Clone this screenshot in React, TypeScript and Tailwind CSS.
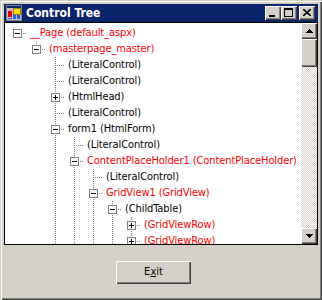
import React from "react";

type Row = {
  level: number;
  text: string;
  red?: boolean;
  box?: "minus" | "plus";
  anc: boolean[];
  next: boolean;
  root?: boolean;
};

// visible part of the control tree
const rows: Row[] = [
  { level: 0, text: "__Page (default_aspx)", red: true, box: "minus", anc: [], next: false, root: true },
  { level: 1, text: "(masterpage_master)", red: true, box: "minus", anc: [false], next: false },
  { level: 2, text: "(LiteralControl)", anc: [false, false], next: true },
  { level: 2, text: "(LiteralControl)", anc: [false, false], next: true },
  { level: 2, text: "(HtmlHead)", box: "plus", anc: [false, false], next: true },
  { level: 2, text: "(LiteralControl)", anc: [false, false], next: true },
  { level: 2, text: "form1 (HtmlForm)", box: "minus", anc: [false, false], next: true },
  { level: 3, text: "(LiteralControl)", anc: [false, false, true], next: true },
  { level: 3, text: "ContentPlaceHolder1 (ContentPlaceHolder)", red: true, box: "minus", anc: [false, false, true], next: true },
  { level: 4, text: "(LiteralControl)", anc: [false, false, true, true], next: true },
  { level: 4, text: "GridView1 (GridView)", red: true, box: "minus", anc: [false, false, true, true], next: true },
  { level: 5, text: "(ChildTable)", box: "minus", anc: [false, false, true, true, true], next: true },
  { level: 6, text: "(GridViewRow)", red: true, box: "plus", anc: [false, false, true, true, true, true], next: true },
  { level: 6, text: "(GridViewRow)", red: true, box: "plus", anc: [false, false, true, true, true, true], next: true },
];

function TreeLines({ row }: { row: Row }) {
  const w = 25 + 19 * row.level;
  const c = 12 + 19 * row.level;
  const dot = { stroke: "#808080", strokeWidth: 1, strokeDasharray: "1 1" };
  return (
    <svg width={w} height={16} className="shrink-0" shapeRendering="crispEdges">
      {row.anc.map((on, k) =>
        on ? <line key={k} x1={12 + 19 * k + 0.5} y1={0} x2={12 + 19 * k + 0.5} y2={16} {...dot} /> : null
      )}
      {!row.root && <line x1={c + 0.5} y1={0} x2={c + 0.5} y2={8} {...dot} />}
      {row.next && <line x1={c + 0.5} y1={8} x2={c + 0.5} y2={16} {...dot} />}
      <line x1={row.box ? c + 6 : c + 2} y1={8.5} x2={c + 9} y2={8.5} {...dot} />
      {row.box && (
        <g>
          <rect x={c - 3.5} y={4.5} width={8} height={8} fill="#fff" stroke="#808080" />
          <line x1={c - 2} y1={8.5} x2={c + 3} y2={8.5} stroke="#000" />
          {row.box === "plus" && <line x1={c + 0.5} y1={6} x2={c + 0.5} y2={11} stroke="#000" />}
        </g>
      )}
    </svg>
  );
}

const raised =
  "shadow-[inset_1px_1px_#fff,inset_-1px_-1px_#404040,inset_-2px_-2px_#808080] bg-[#d4d0c8]";

function Arrow({ up }: { up?: boolean }) {
  return (
    <svg width="7" height="4" viewBox="0 0 7 4" shapeRendering="crispEdges">
      <path d={up ? "M3.5 0 L7 4 L0 4 Z" : "M0 0 L7 0 L3.5 4 Z"} fill="#000" />
    </svg>
  );
}

export default function App() {
  return (
    <div className="w-[322px] h-[300px] bg-[#d4d0c8] p-1 flex flex-col font-['DejaVu_Sans_Condensed','DejaVu_Sans',sans-serif] shadow-[inset_1px_1px_#d4d0c8,inset_2px_2px_#fff,inset_-1px_-1px_#404040,inset_-2px_-2px_#808080]">
      {/* title bar */}
      <div className="h-[18px] bg-[#0a246a] flex items-center pl-[2px] pr-[3px] shrink-0">
        <svg width="16" height="16" viewBox="0 0 16 16" shapeRendering="crispEdges">
          <rect x="0.5" y="0.5" width="15" height="15" fill="#c0c0c0" stroke="#808080" />
          <rect x="1" y="1" width="14" height="2" fill="#0a246a" />
          <rect x="7" y="3" width="7" height="6" fill="#ffd800" stroke="#a08000" />
          <rect x="2" y="6" width="4" height="6" fill="#e00000" />
          <rect x="7" y="10" width="3" height="4" fill="#2060e0" />
          <rect x="11" y="10" width="3" height="4" fill="#2060e0" />
          <rect x="2" y="13" width="4" height="1" fill="#2060e0" />
        </svg>
        <span className="ml-[4px] text-white font-bold text-[12px] leading-none">Control Tree</span>
        <div className="ml-auto flex items-center">
          <div className={`w-[16px] h-[14px] flex items-end justify-center pb-[3px] ${raised}`}>
            <div className="w-[6px] h-[2px] bg-black -ml-[2px]" />
          </div>
          <div className={`w-[16px] h-[14px] flex items-center justify-center ${raised}`}>
            <div className="w-[9px] h-[9px] border border-black border-t-2 -mt-[1px] -ml-[1px]" />
          </div>
          <div className={`w-[16px] h-[14px] ml-[2px] flex items-center justify-center ${raised}`}>
            <svg width="8" height="7" viewBox="0 0 8 7" className="-ml-[1px] -mt-[1px]">
              <path d="M0 0 L8 7 M8 0 L0 7" stroke="#000" strokeWidth="1.6" />
            </svg>
          </div>
        </div>
      </div>

      {/* tree panel */}
      <div className="h-[223px] border border-black bg-white flex shrink-0">
        <div className="flex-1 overflow-hidden pt-[2px]">
          {rows.map((r, i) => (
            <div key={i} className="h-[16px] flex items-center">
              <TreeLines row={r} />
              <span
                className={`text-[11px] leading-[16px] tracking-[-0.1px] whitespace-nowrap ${r.red ? "text-[#ff0000]" : "text-black"}`}
              >
                {r.text}
              </span>
            </div>
          ))}
        </div>
        <div className="w-[16px] flex flex-col shrink-0">
          <div className={`h-[16px] flex items-center justify-center ${raised}`}>
            <Arrow up />
          </div>
          <div className={`h-[28px] ${raised}`} />
          <div className="flex-1 bg-[repeating-conic-gradient(#d4d0c8_0_25%,#fff_0_50%)] bg-[length:2px_2px]" />
          <div className={`h-[16px] flex items-center justify-center ${raised}`}>
            <Arrow />
          </div>
        </div>
      </div>

      {/* bottom */}
      <div className="flex-1">
        <button
          className={`mt-[16px] ml-[112px] w-[75px] h-[23px] text-[11px] text-black flex items-center justify-center ${raised}`}
        >
          E<u>x</u>it
        </button>
      </div>
    </div>
  );
}
